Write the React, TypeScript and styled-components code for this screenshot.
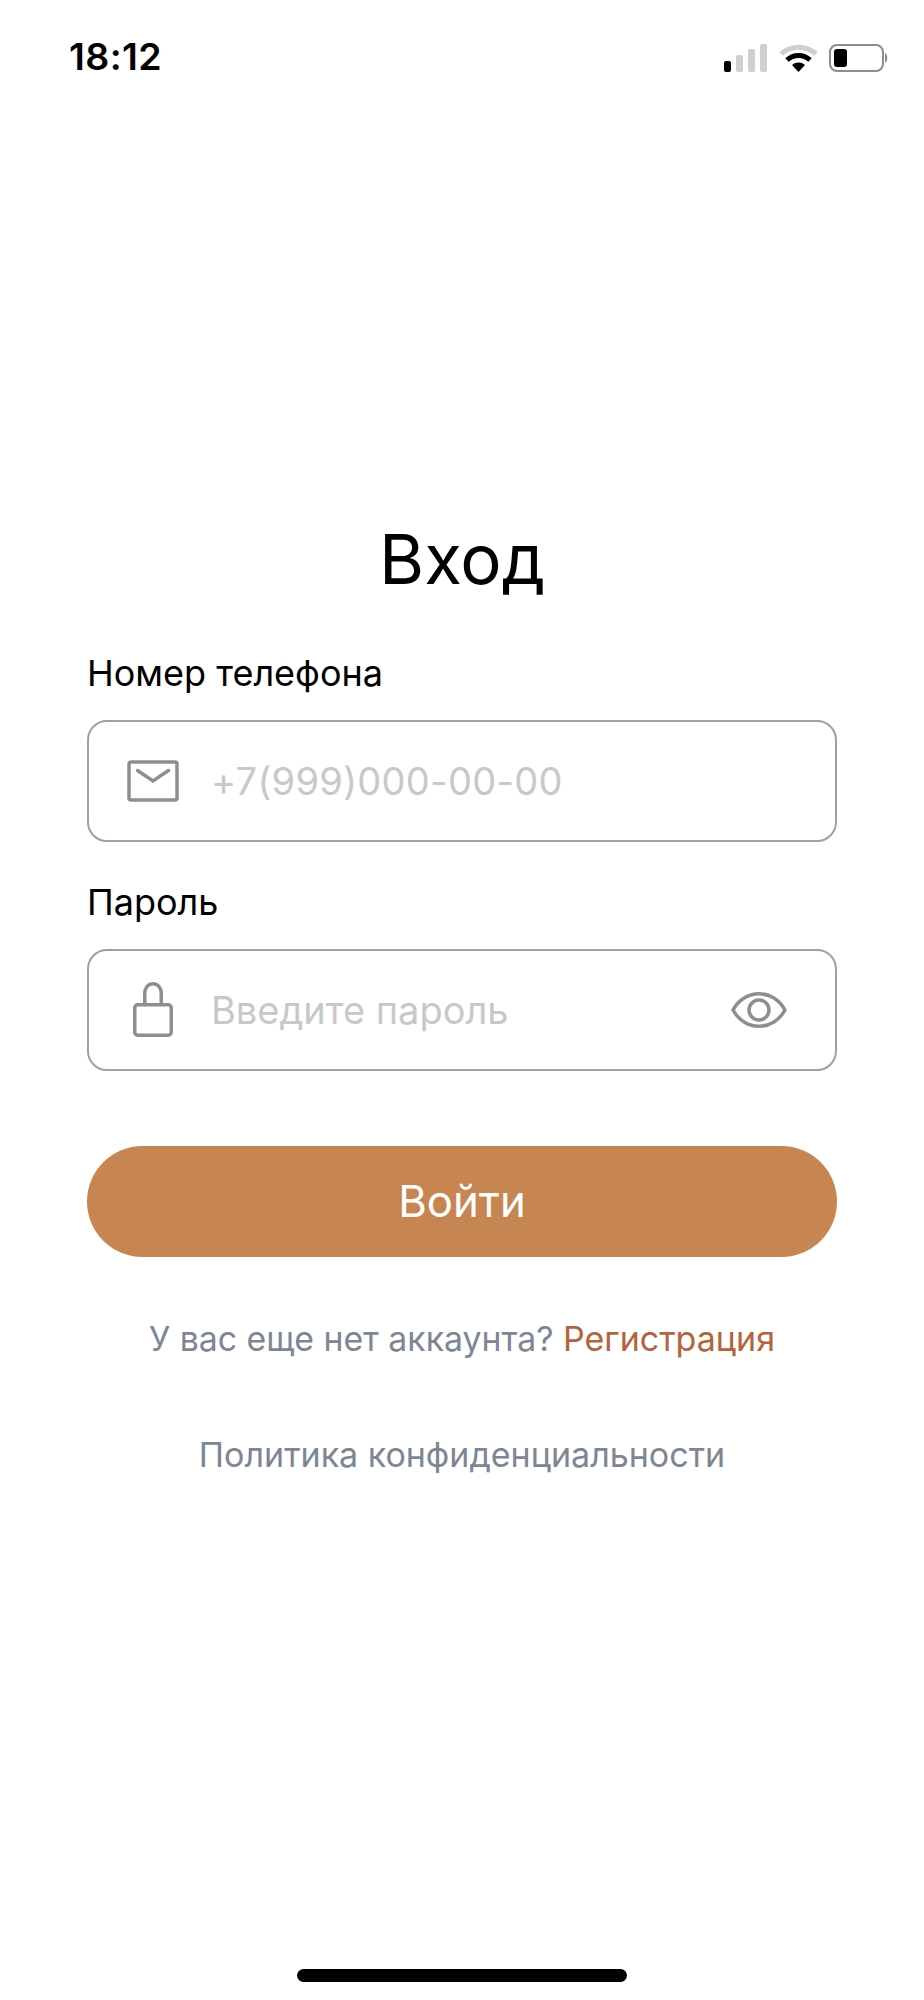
import React from "react";
import styled, { createGlobalStyle } from "styled-components";

const Global = createGlobalStyle`
  html, body { margin: 0; padding: 0; background: #fff; }
  body { font-family: Inter, "Liberation Sans", sans-serif; }
`;

const Screen = styled.div`
  width: 924px;
  height: 2000px;
  display: flex;
  flex-direction: column;
  background: #fff;
  color: #000;
`;

const StatusBar = styled.div`
  height: 112px;
  box-sizing: border-box;
  padding: 35px 35px 0 69px;
  display: flex;
  justify-content: space-between;
  align-items: flex-start;
`;

const Clock = styled.div`
  font-size: 37.5px;
  line-height: 44px;
  font-weight: 600;
  letter-spacing: 0.4px;
`;

const StatusIcons = styled.div`
  padding-top: 9px;
`;

const Form = styled.main`
  flex: 1;
  padding: 404px 87px 0;
  display: flex;
  flex-direction: column;
`;

const Title = styled.h1`
  margin: 0;
  height: 86px;
  font-size: 69px;
  line-height: 86px;
  font-weight: 400;
  text-align: center;
`;

const Label = styled.label<{ $top: number }>`
  display: block;
  margin-top: ${(p) => p.$top}px;
  font-size: 36px;
  line-height: 42px;
  font-weight: 400;
`;

const Field = styled.div`
  margin-top: 26px;
  height: 122px;
  box-sizing: border-box;
  border: 2px solid #a0a0a0;
  border-radius: 20px;
  display: flex;
  align-items: center;
  padding-right: 48px;
`;

const FieldIcon = styled.div`
  width: 122px;
  padding-left: 37px;
  box-sizing: border-box;
  flex: none;
  display: flex;
`;

const Placeholder = styled.div<{ $tracking?: number }>`
  flex: 1;
  font-size: 38px;
  line-height: 44px;
  letter-spacing: ${(p) => p.$tracking ?? 0}px;
  color: #c8c8c8;
`;

const Submit = styled.button`
  margin-top: 75px;
  height: 111px;
  border: none;
  border-radius: 56px;
  background: #c78552;
  color: #fff;
  font: 400 43.7px/50px Inter, "Liberation Sans", sans-serif;
`;

const Prompt = styled.p`
  margin: 60px 0 0;
  font-size: 33.8px;
  line-height: 44px;
  text-align: center;
  color: #7d8694;
  white-space: nowrap;
`;

const Accent = styled.a`
  font-size: 34px;
  color: #b5633a;
`;

const Policy = styled.p`
  margin: 72px 0 0;
  font-size: 34px;
  line-height: 44px;
  text-align: center;
  color: #7d8694;
`;

const HomeBar = styled.div`
  align-self: center;
  width: 330px;
  height: 13px;
  margin-bottom: 18px;
  border-radius: 7px;
  background: #000;
`;

export default function App() {
  return (
    <Screen>
      <Global />
      <StatusBar>
        <Clock>18:12</Clock>
        <StatusIcons>
          <svg width="165" height="30" viewBox="0 0 165 30">
            <rect x="0" y="17" width="7" height="11" rx="2" fill="#000" />
            <rect x="12" y="11" width="7" height="17" rx="2" fill="#cfcfcf" />
            <rect x="24" y="5" width="7" height="23" rx="2" fill="#cfcfcf" />
            <rect x="36" y="0" width="7" height="28" rx="2" fill="#cfcfcf" />
            <path d="M57 10 A26 26 0 0 1 92 10" fill="none" stroke="#cfcfcf" strokeWidth="5" />
            <path d="M63 16 A17 17 0 0 1 86 16" fill="none" stroke="#000" strokeWidth="5" />
            <path d="M68 21 L74.500 28 L81 21 A10 10 0 0 0 68 21 Z" fill="#000" />
            <rect x="106" y="1" width="53" height="26" rx="7" fill="none" stroke="#8d8d8d" strokeWidth="2" />
            <rect x="110" y="5" width="13" height="18" rx="3" fill="#000" />
            <path d="M161 9 C164 10 164 18 161 19 Z" fill="#8d8d8d" />
          </svg>
        </StatusIcons>
      </StatusBar>
      <Form>
        <Title>Вход</Title>
        <Label $top={50}>Номер телефона</Label>
        <Field>
          <FieldIcon>
            <svg width="54" height="42" viewBox="0 0 54 42" fill="none" stroke="#8e8e8e" strokeWidth="3.500">
              <rect x="3" y="2" width="48" height="38" rx="2" />
              <path d="M11.500 10.500 L27 21 L42.500 10.500" strokeLinecap="round" />
            </svg>
          </FieldIcon>
          <Placeholder $tracking={0.3}>+7(999)000-00-00</Placeholder>
        </Field>
        <Label $top={39}>Пароль</Label>
        <Field>
          <FieldIcon>
            <svg width="54" height="56" viewBox="0 0 54 56" fill="none" stroke="#8e8e8e" strokeWidth="3.500">
              <rect x="8.750" y="22.750" width="36.500" height="30.500" rx="3" />
              <path d="M18.750 22.750 V11 A8.250 9.250 0 0 1 35.250 11 V22.750" />
            </svg>
          </FieldIcon>
          <Placeholder>Введите пароль</Placeholder>
          <svg width="56" height="38" viewBox="0 0 56 38" fill="none" stroke="#8e8e8e" strokeWidth="3.500">
            <path d="M2 19 C14 -2.700 42 -2.700 54 19 C42 40.700 14 40.700 2 19 Z" strokeLinejoin="round" />
            <circle cx="28" cy="19" r="10" />
          </svg>
        </Field>
        <Submit>Войти</Submit>
        <Prompt>
          У вас еще нет аккаунта? <Accent>Регистрация</Accent>
        </Prompt>
        <Policy>Политика конфиденциальности</Policy>
      </Form>
      <HomeBar />
    </Screen>
  );
}
